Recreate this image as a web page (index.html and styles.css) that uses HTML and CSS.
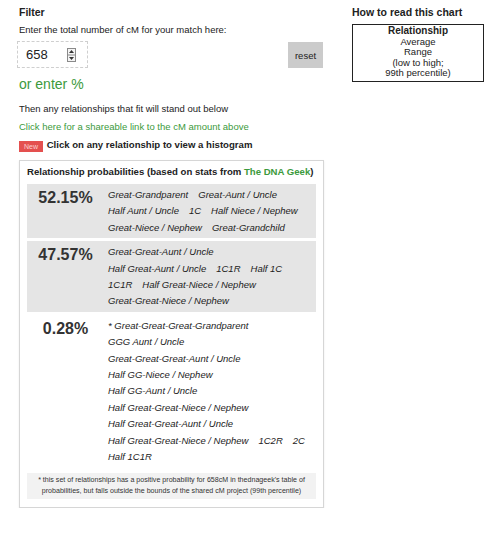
FILE: index.html
```html
<!DOCTYPE html>
<html lang="en">
<head>
    <meta charset="UTF-8">
    <meta name="viewport" content="width=device-width, initial-scale=1.0">
    <title>cM Relationship Chart</title>
    <link rel="stylesheet" href="styles.css">
</head>
<body>
    <div class="page">
        <div class="filter">
            <h2>Filter</h2>
            <p class="prompt">Enter the total number of cM for your match here:</p>
            <div class="input-row">
                <div class="number-field">
                    <span class="value">658</span>
                    <svg class="spinner" width="9" height="14" viewBox="0 0 9 14">
                        <rect x="0.5" y="0.5" width="8" height="13" fill="#f4f4f4" stroke="#8a8a8a"/>
                        <line x1="0.5" y1="7" x2="8.5" y2="7" stroke="#8a8a8a"/>
                        <path d="M2 5 L4.5 2 L7 5 Z" fill="#333"/>
                        <path d="M2 9 L4.5 12 L7 9 Z" fill="#333"/>
                    </svg>
                </div>
                <button class="reset">reset</button>
            </div>
            <p class="percent-toggle">or enter %</p>
            <p class="hint">Then any relationships that fit will stand out below</p>
            <a class="share-link" href="#">Click here for a shareable link to the cM amount above</a>
            <p class="histogram-note"><span class="badge">New</span> Click on any relationship to view a histogram</p>

            <div class="results">
                <h3>Relationship probabilities (based on stats from <a href="#">The DNA Geek</a>)</h3>

                <div class="group shaded">
                    <div class="pct">52.15%</div>
                    <div class="rels">
                        <div class="line"><span>Great-Grandparent</span><span>Great-Aunt / Uncle</span></div>
                        <div class="line"><span>Half Aunt / Uncle</span><span>1C</span><span>Half Niece / Nephew</span></div>
                        <div class="line"><span>Great-Niece / Nephew</span><span>Great-Grandchild</span></div>
                    </div>
                </div>

                <div class="group shaded">
                    <div class="pct">47.57%</div>
                    <div class="rels">
                        <div class="line"><span>Great-Great-Aunt / Uncle</span></div>
                        <div class="line"><span>Half Great-Aunt / Uncle</span><span>1C1R</span><span>Half 1C</span></div>
                        <div class="line"><span>1C1R</span><span>Half Great-Niece / Nephew</span></div>
                        <div class="line"><span>Great-Great-Niece / Nephew</span></div>
                    </div>
                </div>

                <div class="group">
                    <div class="pct">0.28%</div>
                    <div class="rels">
                        <div class="line"><span>* Great-Great-Great-Grandparent</span></div>
                        <div class="line"><span>GGG Aunt / Uncle</span></div>
                        <div class="line"><span>Great-Great-Great-Aunt / Uncle</span></div>
                        <div class="line"><span>Half GG-Niece / Nephew</span></div>
                        <div class="line"><span>Half GG-Aunt / Uncle</span></div>
                        <div class="line"><span>Half Great-Great-Niece / Nephew</span></div>
                        <div class="line"><span>Half Great-Great-Aunt / Uncle</span></div>
                        <div class="line"><span>Half Great-Great-Niece / Nephew</span><span>1C2R</span><span>2C</span></div>
                        <div class="line"><span>Half 1C1R</span></div>
                    </div>
                </div>

                <p class="footnote">* this set of relationships has a positive probability for 658cM in thednageek's table of probabilities, but falls outside the bounds of the shared cM project (99th percentile)</p>
            </div>
        </div>

        <div class="legend">
            <h2>How to read this chart</h2>
            <div class="legend-box">
                <strong>Relationship</strong>
                <span>Average</span>
                <span>Range</span>
                <span>(low to high;</span>
                <span>99th percentile)</span>
            </div>
        </div>
    </div>
</body>
</html>
```

FILE: styles.css
```css
body {
    margin: 0;
    background-color: #fff;
    color: #222;
    font-family: "Liberation Sans", Arial, sans-serif;
    font-size: 9.5px;
}

.page {
    display: flex;
    padding: 6px 0 0 19px;
}

h2 {
    margin: 0;
    font-size: 10.5px;
    font-weight: bold;
    line-height: 13px;
}

p {
    margin: 0;
}

.filter {
    width: 305px;
}

.prompt {
    margin-top: 5px;
    line-height: 12px;
}

.input-row {
    display: flex;
    justify-content: space-between;
    align-items: flex-start;
    margin-top: 5px;
}

.number-field {
    box-sizing: border-box;
    display: flex;
    align-items: center;
    justify-content: space-between;
    width: 71px;
    height: 27px;
    margin-left: -2px;
    padding: 0 11px 0 8px;
    border: 1px dashed #cfcfcf;
}

.value {
    font-size: 13px;
    color: #222;
}

.reset {
    width: 35px;
    height: 26px;
    margin-top: 1px;
    margin-right: 1px;
    padding: 0;
    border: none;
    background-color: #cbcbcb;
    color: #222;
    font-family: inherit;
    font-size: 9.5px;
    cursor: pointer;
}

.percent-toggle {
    margin-top: 8px;
    color: #3c9a3c;
    font-size: 14px;
    line-height: 16px;
}

.hint {
    margin-top: 11px;
    line-height: 12px;
}

.share-link {
    display: block;
    margin-top: 6px;
    color: #3c9a3c;
    text-decoration: none;
    line-height: 12px;
}

.histogram-note {
    margin-top: 5px;
    font-size: 9.6px;
    font-weight: bold;
    line-height: 13px;
}

.badge {
    display: inline-block;
    width: 24px;
    margin-right: 1px;
    background-color: #e4504f;
    color: #fbd0d0;
    font-size: 7px;
    font-weight: normal;
    line-height: 11px;
    text-align: center;
    vertical-align: -1px;
}

.results {
    margin-top: 8px;
    padding: 4px 7px 8px;
    border: 1px solid #d6d6d6;
    box-shadow: 0 1px 2px rgba(0, 0, 0, 0.08);
}

.results h3 {
    margin: 0 0 5px;
    font-size: 9.6px;
    font-weight: bold;
    line-height: 14px;
    white-space: nowrap;
}

.results h3 a {
    color: #3c9a3c;
    text-decoration: none;
}

.group {
    display: flex;
    padding: 3px 0 2px;
    margin-bottom: 3px;
}

.group.shaded {
    background-color: #e5e5e5;
}

.pct {
    width: 77px;
    padding-right: 4px;
    color: #333;
    font-size: 16px;
    font-weight: bold;
    line-height: 22px;
    text-align: center;
}

.rels {
    flex: 1;
    font-style: italic;
    color: #222;
}

.line {
    display: flex;
    gap: 10px;
    line-height: 16.4px;
}

.footnote {
    margin-top: 5px;
    padding: 2px 2px;
    background-color: #f2f2f2;
    font-size: 7.1px;
    line-height: 11px;
    text-align: center;
    color: #333;
}

.legend {
    margin-left: 28px;
}

.legend-box {
    display: flex;
    flex-direction: column;
    align-items: center;
    width: 130px;
    margin-top: 5px;
    padding: 1px 0 2px;
    border: 1px solid #222;
    line-height: 10.6px;
}

.legend-box strong {
    font-size: 10px;
}
```
